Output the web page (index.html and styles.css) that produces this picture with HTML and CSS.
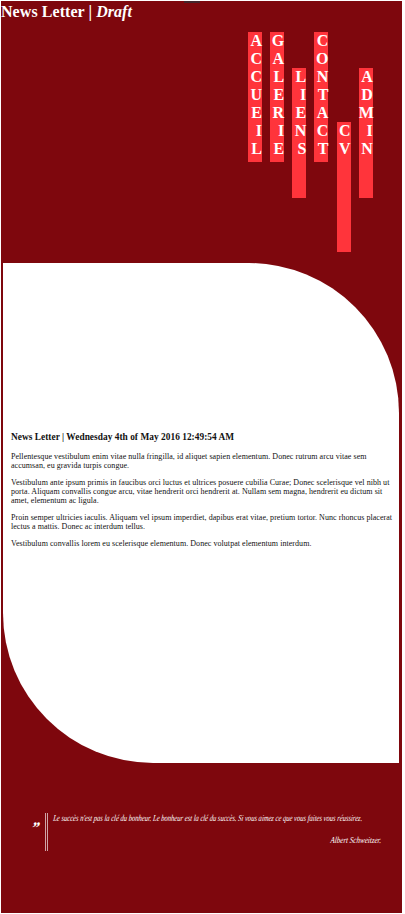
FILE: index.html
```
<!DOCTYPE html>
<html lang="fr">
<head>
<meta charset="utf-8">
<title>News Letter</title>
<link rel="stylesheet" href="styles.css">
</head>
<body>
<div class="page">
  <span class="tab"></span>
  <header class="header">
    <h1 class="title"><span class="name">News Letter |</span> <em>Draft</em></h1>
    <nav class="menu">
      <a class="bar">A<br>C<br>C<br>U<br>E<br>I<br>L</a>
      <a class="bar">G<br>A<br>L<br>E<br>R<br>I<br>E</a>
      <a class="bar drop-two">L<br>I<br>E<br>N<br>S</a>
      <a class="bar">C<br>O<br>N<br>T<br>A<br>C<br>T</a>
      <a class="bar drop-five">C<br>V</a>
      <a class="bar drop-two">A<br>D<br>M<br>I<br>N</a>
    </nav>
  </header>
  <main class="panel">
    <h2 class="heading">News Letter | Wednesday 4th of May 2016 12:49:54 AM</h2>
    <p>Pellentesque vestibulum enim vitae nulla fringilla, id aliquet sapien elementum. Donec rutrum arcu vitae sem<br>accumsan, eu gravida turpis congue.</p>
    <p>Vestibulum ante ipsum primis in faucibus orci luctus et ultrices posuere cubilia Curae; Donec scelerisque vel nibh ut<br>porta. Aliquam convallis congue arcu, vitae hendrerit orci hendrerit at. Nullam sem magna, hendrerit eu dictum sit<br>amet, elementum ac ligula.</p>
    <p>Proin semper ultricies iaculis. Aliquam vel ipsum imperdiet, dapibus erat vitae, pretium tortor. Nunc rhoncus placerat<br>lectus a mattis. Donec ac interdum tellus.</p>
    <p>Vestibulum convallis lorem eu scelerisque elementum. Donec volutpat elementum interdum.</p>
  </main>
  <footer class="footer">
    <span class="mark">”</span>
    <blockquote class="quote">
      <div class="saying">Le succès n'est pas la clé du bonheur. Le bonheur est la clé du succès. Si vous aimez ce que vous faites vous réussirez.</div>
      <cite class="author">Albert Schweitzer.</cite>
    </blockquote>
  </footer>
</div>
</body>
</html>
```

FILE: styles.css
```
* { box-sizing: border-box; }
body {
  margin: 0;
  background: #fff;
  font-family: "Liberation Serif", serif;
}
.page {
  position: relative;
  width: 401px;
  height: 912px;
  margin: 1px;
  background: #7e070d;
  overflow: hidden;
}
.tab {
  position: absolute;
  left: 183px;
  top: 0;
  width: 16px;
  height: 2px;
  background: #43252b;
}
.header { height: 262px; color: #fff; }
.title {
  margin: 0;
  height: 31px;
  padding-top: 2px;
  font-size: 16px;
  line-height: 18px;
  letter-spacing: 0.06px;
  white-space: nowrap;
}
.menu {
  display: flex;
  align-items: flex-start;
  gap: 8.15px;
  margin-left: 247px;
}
.bar {
  width: 14px;
  height: 130px;
  background: #ff343b;
  font-size: 16px;
  font-weight: bold;
  line-height: 18px;
  text-align: right;
}
.drop-two { margin-top: 36px; }
.drop-five { margin-top: 90px; }
.panel {
  width: 396px;
  height: 500px;
  margin-left: 2px;
  padding: 168px 0 0 8px;
  border-radius: 0 150px 0 150px;
  background: #fff;
  color: #111;
  white-space: nowrap;
}
.heading {
  margin: 0 0 9px;
  font-size: 9.33px;
  line-height: 12px;
  letter-spacing: 0.04px;
}
.panel p {
  margin: 0 0 8px;
  font-size: 8px;
  line-height: 9px;
  letter-spacing: 0.05px;
}
.footer {
  display: flex;
  align-items: flex-start;
  padding: 50px 0 0 30px;
  color: #fff;
}
.mark {
  width: 14px;
  font: italic bold 16px/30px "Liberation Serif", serif;
  transform: skewX(-14deg);
}
.quote {
  width: 336px;
  height: 38px;
  margin: 0;
  padding-left: 5px;
  border-left: 3px double #cfa4a6;
  font: italic 9px/11px "Liberation Serif", serif;
  white-space: nowrap;
}
.saying {
  width: max-content;
  transform: scaleX(0.728) skewX(-8deg);
  transform-origin: 0 70%;
}
.author {
  display: block;
  margin-top: 11px;
  text-align: right;
  transform: scaleX(0.78) skewX(-8deg);
  transform-origin: 100% 70%;
}
```
